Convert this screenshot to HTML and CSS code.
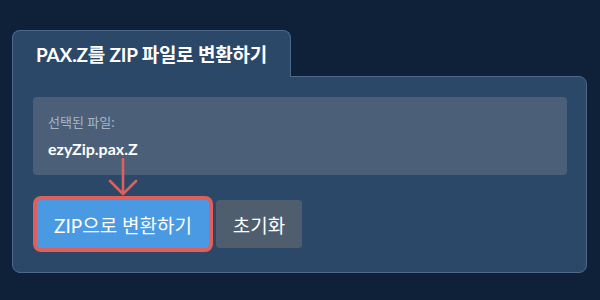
FILE: index.html
```html
<!DOCTYPE html>
<html lang="ko">
<head>
<meta charset="utf-8">
<link rel="stylesheet" href="styles.css">
</head>
<body>
<div class="wrap">
  <div class="tab">PAX.Z를 ZIP 파일로 변환하기</div>
  <div class="panel">
    <div class="info">
      <div class="label">선택된 파일:</div>
      <div class="file">ezyZip.pax.Z</div>
    </div>
    <div class="actions">
      <button class="btn primary">ZIP으로 변환하기</button>
      <button class="btn secondary">초기화</button>
      <svg class="arrow" width="34" height="40" viewBox="0 0 34 40">
        <path d="M17 0 V35 M4 23 L17 36 L30 23" fill="none" stroke="#de605a" stroke-width="2.6" stroke-linecap="round" stroke-linejoin="round"/>
      </svg>
    </div>
  </div>
</div>
</body>
</html>
```
FILE: styles.css
```css
html, body {
  margin: 0;
  padding: 0;
  background: #0f2139;
  width: 600px;
  height: 300px;
  overflow: hidden;
  font-family: Lato, "Noto Sans CJK KR", sans-serif;
}
.wrap {
  padding: 30px 0 0 12px;
  width: 575px;
}
.tab {
  display: inline-block;
  position: relative;
  z-index: 1;
  box-sizing: border-box;
  width: 279px;
  height: 47px;
  margin-bottom: -1px;
  padding: 13px 0 0 23px;
  background: #2c4868;
  border: 1px solid #4d6a8b;
  border-bottom: none;
  border-radius: 8px 8px 0 0;
  color: #fff;
  font-weight: 700;
  font-size: 19px;
  line-height: 22px;
  letter-spacing: -0.2px;
}
.panel {
  box-sizing: border-box;
  width: 575px;
  height: 197px;
  background: #2c4868;
  border: 1px solid #4d6a8b;
  border-radius: 0 8px 8px 8px;
  padding: 20px 19px 0 20px;
}
.info {
  box-sizing: border-box;
  height: 78px;
  background: #4b6078;
  border-radius: 4px;
  padding: 16px 15px 0 15px;
}
.label {
  color: #a9b4c3;
  font-size: 13px;
  line-height: 18px;
}
.file {
  margin-top: 8px;
  color: #fff;
  font-weight: 700;
  font-size: 16px;
  line-height: 20px;
}
.actions {
  position: relative;
  display: flex;
  gap: 7px;
  margin-top: 25px;
  padding-left: 4px;
}
.btn {
  height: 48px;
  border: none;
  border-radius: 4px;
  color: #fff;
  font-family: Lato, "Noto Sans CJK KR", sans-serif;
  font-size: 19px;
  padding: 0 10px;
}
.primary {
  width: 172px;
  background: #4a9ae3;
  box-shadow: 0 0 0 4px #de605a;
}
.secondary {
  width: 86px;
  background: #4f5e6e;
}
.arrow {
  position: absolute;
  left: 73px;
  top: -42px;
}
```
